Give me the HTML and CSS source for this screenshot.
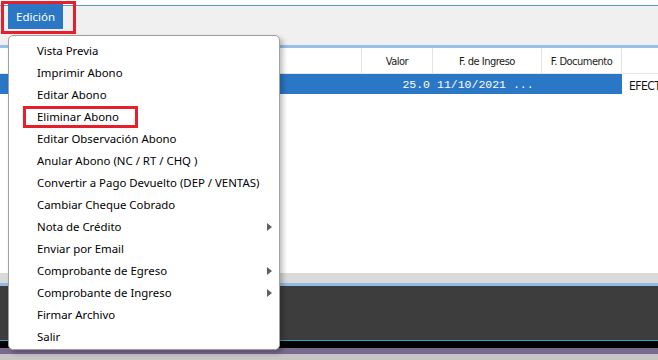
FILE: index.html
```html
<!DOCTYPE html>
<html lang="es">
<head>
  <meta charset="UTF-8" />
  <title>Abonos</title>
  <link rel="stylesheet" href="styles.css">
</head>
<body>
  <div class="window">
    <div class="topline"></div>
    <div class="menubar">
      <div class="menu-btn">Edición</div>
    </div>
    <div class="sep-blue"></div>

    <div class="grid">
      <div class="grid-head">
        <div class="cell"></div>
        <div class="cell">Valor</div>
        <div class="cell">F. de Ingreso</div>
        <div class="cell">F. Documento</div>
        <div class="cell last"></div>
      </div>
      <div class="grid-row">
        <div class="cell sel"></div>
        <div class="cell sel num">25.0</div>
        <div class="cell sel date">11/10/2021 ...</div>
        <div class="cell sel"></div>
        <div class="cell plain">EFECT</div>
      </div>
    </div>

    <div class="status">
      <div class="status-gray"></div>
      <div class="status-blue"></div>
      <div class="status-dark"></div>
      <div class="status-teal"></div>
      <div class="status-black"></div>
      <div class="status-purple"></div>
      <div class="status-end"></div>
    </div>
  </div>

  <!-- dropdown of Edición -->
  <ul class="dropdown">
    <li>Vista Previa</li>
    <li>Imprimir Abono</li>
    <li>Editar Abono</li>
    <li>Eliminar Abono</li>
    <li>Editar Observación Abono</li>
    <li>Anular Abono (NC / RT / CHQ )</li>
    <li>Convertir a Pago Devuelto (DEP / VENTAS)</li>
    <li>Cambiar Cheque Cobrado</li>
    <li class="sub">Nota de Crédito</li>
    <li>Enviar por Email</li>
    <li class="sub">Comprobante de Egreso</li>
    <li class="sub">Comprobante de Ingreso</li>
    <li>Firmar Archivo</li>
    <li>Salir</li>
  </ul>

  <div class="mark mark-menu"></div>
  <div class="mark mark-item"></div>
</body>
</html>
```

FILE: styles.css
```css
* {
  box-sizing: border-box;
}

body {
  margin: 0;
  width: 658px;
  height: 360px;
  overflow: hidden;
  background: #fff;
  font-family: "Noto Sans", sans-serif;
  font-size: 12px;
  position: relative;
}

.window {
  display: flex;
  flex-direction: column;
  height: 360px;
}

.topline {
  height: 6px;
  border-bottom: 1px solid #5a9fb3;
  background: #fff;
}

.menubar {
  height: 39px;
  background: #f0f0f0;
  display: flex;
  align-items: flex-start;
  padding-left: 8px;
}

.menu-btn {
  margin-top: -2px;
  width: 55px;
  height: 25px;
  background: #2a77c5;
  color: #fff;
  display: flex;
  align-items: center;
  padding-left: 8px;
  font-size: 11.5px;
}

.sep-blue {
  height: 3px;
  background: #97c0e8;
}

.grid {
  flex: 1;
  background: #fff;
  font-family: "DejaVu Sans Condensed", "Liberation Sans", sans-serif;
  font-size: 11px;
  letter-spacing: -0.5px;
}

.grid-head,
.grid-row {
  display: grid;
  grid-template-columns: 362px 71px 109px 80px 1fr;
}

.grid-head {
  height: 26px;
  border-bottom: 1px solid #e6e6e6;
}

.grid-head .cell {
  display: flex;
  align-items: center;
  justify-content: center;
  border-right: 1px solid #e3e3e3;
  color: #1a1a1a;
  padding-top: 1px;
}

.grid-head .cell.last {
  border-right: none;
}

.grid-row {
  height: 20px;
}

.grid-row .cell {
  display: flex;
  align-items: center;
}

.cell.sel {
  background: #2a77c5;
  color: #fff;
  font-family: "Liberation Mono", monospace;
  font-size: 11.5px;
  letter-spacing: 0;
}

.cell.num {
  justify-content: flex-end;
  padding-right: 3px;
}

.cell.date {
  padding-left: 4px;
}

.cell.plain {
  padding-left: 7px;
  color: #111;
  font-size: 12px;
  white-space: nowrap;
  overflow: hidden;
  align-items: flex-end;
  padding-bottom: 1px;
}

.status {
  display: flex;
  flex-direction: column;
}

.status-gray { height: 10px; background: #dadada; }
.status-blue { height: 3px; background: #8fbbe6; }
.status-dark { height: 54px; background: #3d3d3d; }
.status-teal { height: 1px; background: #3aa3bd; }
.status-black { height: 7px; background: #000; }
.status-purple { height: 6px; background: #7a6a8e; }
.status-end { height: 6px; background: #c6c6c6; }

.dropdown {
  position: absolute;
  left: 8px;
  top: 35px;
  width: 272px;
  margin: 0;
  padding: 4px 0 1px;
  list-style: none;
  background: #fff;
  border: 1px solid #a0a0a0;
  border-radius: 5px;
  box-shadow: 3px 3px 5px rgba(0, 0, 0, 0.25);
  font-size: 11.4px;
}

.dropdown li {
  height: 22px;
  line-height: 22px;
  padding-left: 28px;
  color: #000;
  white-space: nowrap;
  position: relative;
}

.dropdown li.sub::after {
  content: "";
  position: absolute;
  right: 7px;
  top: 7px;
  border-left: 5px solid #606060;
  border-top: 4px solid transparent;
  border-bottom: 4px solid transparent;
}

.mark {
  position: absolute;
  border: 3px solid #e6202a;
}

.mark-menu {
  left: 1px;
  top: 1px;
  width: 75px;
  height: 33px;
}

.mark-item {
  left: 23px;
  top: 106px;
  width: 115px;
  height: 22px;
}
```
